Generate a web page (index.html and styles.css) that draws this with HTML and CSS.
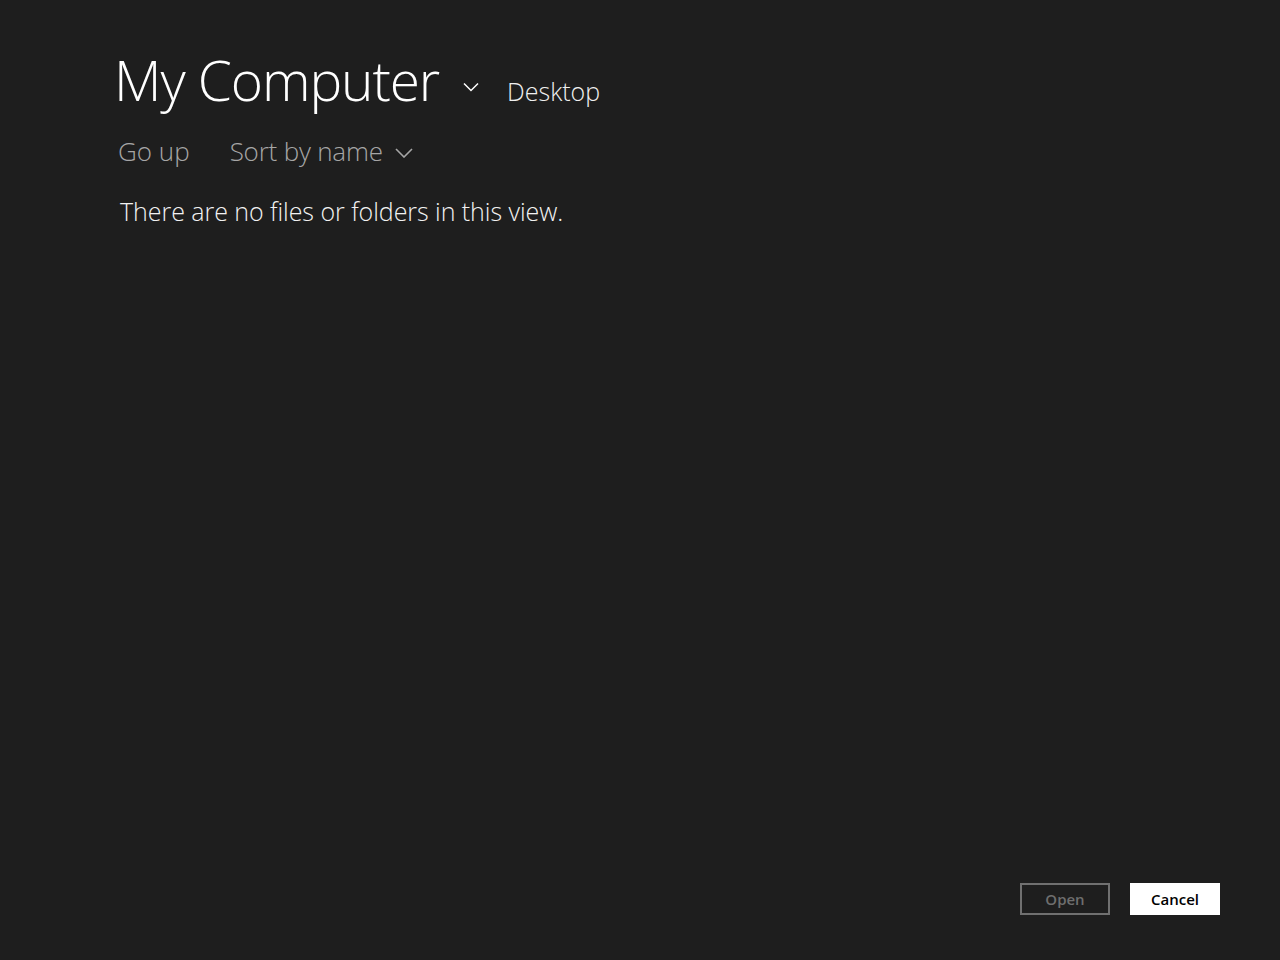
FILE: index.html
```html
<!DOCTYPE html>
<html lang="en">
<head>
<meta charset="utf-8">
<title>My Computer</title>
<link rel="stylesheet" href="styles.css">
</head>
<body>
<div class="page">
  <header class="header">
    <h1 class="title">My Computer</h1>
    <svg class="chev chev-title" viewBox="0 0 16 10" width="16" height="10"><path d="M1 1.5 L8 8.5 L15 1.5" fill="none" stroke="#ffffff" stroke-width="1.5"/></svg>
    <span class="location">Desktop</span>
  </header>
  <nav class="toolbar">
    <span class="tool">Go up</span>
    <span class="tool sort">Sort by name
      <svg class="chev chev-sort" viewBox="0 0 18 10" width="18" height="10"><path d="M1 1 L9 9 L17 1" fill="none" stroke="#a6a6a6" stroke-width="1.6"/></svg>
    </span>
  </nav>
  <p class="empty">There are no files or folders in this view.</p>
  <div class="spacer"></div>
  <footer class="actions">
    <button class="btn btn-open" disabled>Open</button>
    <button class="btn btn-cancel">Cancel</button>
  </footer>
</div>
</body>
</html>
```

FILE: styles.css
```css
html, body {
  margin: 0;
  padding: 0;
  background: #1e1e1e;
  height: 100%;
}
body {
  font-family: "Open Sans", "Noto Sans", sans-serif;
  color: #ffffff;
}
.page {
  height: 960px;
  box-sizing: border-box;
  padding: 40px 60px 45px 114px;
  display: flex;
  flex-direction: column;
}
.header {
  display: flex;
  align-items: baseline;
}
.title {
  margin: 0;
  font-weight: 300;
  font-size: 55px;
  line-height: 80px;
  letter-spacing: -1.1px;
}
.chev-title {
  margin-left: 24px;
  align-self: center;
  margin-top: 14px;
}
.location {
  margin-left: 28px;
  font-weight: 300;
  font-size: 25px;
  color: #f0f0f0;
}
.toolbar {
  display: flex;
  align-items: center;
  margin-top: 11px;
  padding-left: 4px;
  gap: 40px;
}
.tool {
  font-weight: 300;
  font-size: 26px;
  line-height: 40px;
  color: #a6a6a6;
  display: flex;
  align-items: center;
}
.sort {
  letter-spacing: -0.2px;
}
.chev-sort {
  margin-left: 12px;
  margin-top: 4px;
}
.empty {
  margin: 24px 0 0 6px;
  font-size: 25px;
  font-weight: 300;
  line-height: 32px;
  color: #f2f2f2;
  letter-spacing: -0.05px;
}
.spacer {
  flex: 1;
}
.actions {
  display: flex;
  justify-content: flex-end;
  gap: 20px;
}
.btn {
  width: 90px;
  height: 32px;
  font-family: "Open Sans", "Noto Sans", sans-serif;
  font-size: 15px;
  font-weight: 600;
  border: 2px solid #ffffff;
  padding: 0;
}
.btn-open {
  background: transparent;
  border-color: #707070;
  color: #6e6e6e;
}
.btn-cancel {
  background: #ffffff;
  color: #000000;
}
```
